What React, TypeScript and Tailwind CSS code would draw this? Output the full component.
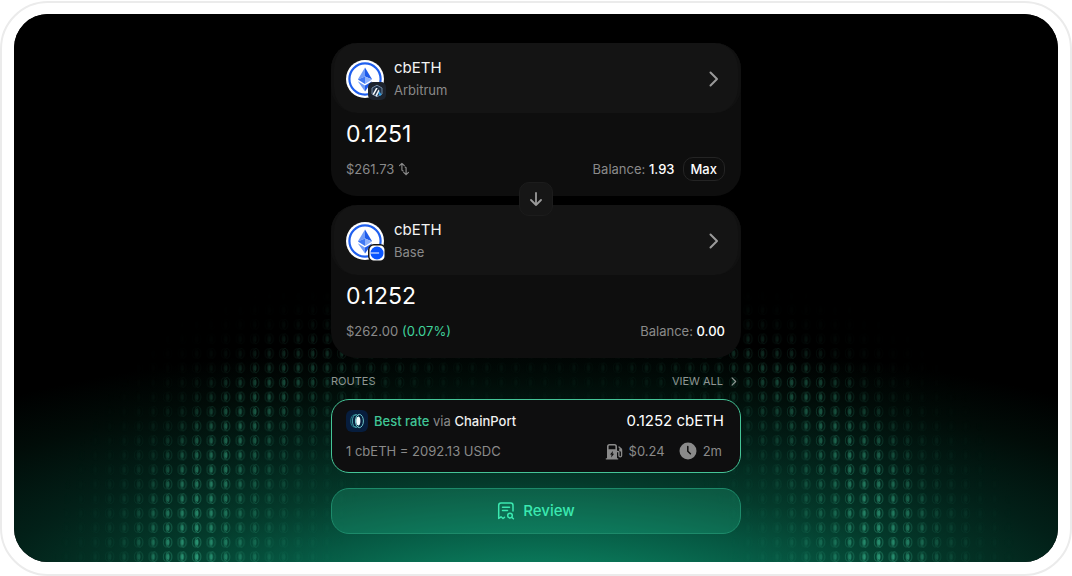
import type { ReactNode } from "react";

type IconProps = { className?: string };

function ChevronRight({ className }: IconProps) {
  return (
    <svg viewBox="0 0 10 16" className={className} fill="none" stroke="currentColor" strokeWidth="2" strokeLinecap="round" strokeLinejoin="round" aria-hidden="true">
      <path d="M1.500 1.500 8 8l-6.500 6.500" />
    </svg>
  );
}

function SwapIcon() {
  return (
    <svg viewBox="0 0 12 14" className="h-[14px] w-3" fill="none" stroke="currentColor" strokeWidth="1.200" strokeLinecap="round" strokeLinejoin="round" aria-hidden="true">
      <path d="M1.500 3.700 3.900 1.300 6.300 3.700M3.900 1.300v6.400c0 .8.400 1.200 1.200 1.200M10.500 10.300l-2.400 2.400-2.400-2.400M8.100 12.700V6.300c0-.8-.4-1.200-1-1.200" />
    </svg>
  );
}

function EthCoin() {
  return (
    <svg viewBox="0 0 38 38" className="size-[38px]" aria-hidden="true">
      <circle cx="19" cy="19" r="19" fill="#fff" />
      <circle cx="19" cy="19" r="15.600" fill="#fff" stroke="#1f5fee" strokeWidth="2.200" />
      <path d="M19 7.400 11.800 19.600 19 16.400z" fill="#6f9bf8" />
      <path d="M19 7.400 26.200 19.600 19 16.400z" fill="#1f5bea" />
      <path d="M11.800 19.600 19 16.400v7.500z" fill="#3f78f3" />
      <path d="M26.200 19.600 19 16.400v7.500z" fill="#8fb2fb" />
      <path d="M11.800 21.300 19 25.500v6.100z" fill="#6f9bf8" />
      <path d="M26.200 21.300 19 25.500v6.100z" fill="#1f5bea" />
    </svg>
  );
}

function ArbitrumBadge() {
  return (
    <svg viewBox="0 0 18 18" className="size-[18px]" aria-hidden="true">
      <rect width="18" height="18" rx="5" fill="#1d232d" />
      <path d="M9 3.200 14 6v6L9 14.800 4 12V6z" fill="#213147" stroke="#7b93ad" strokeWidth=".9" />
      <path d="M4.600 12.200 8 6h1.700l-3.800 7z" fill="#fff" />
      <path d="M7.200 13.700 10.600 7.400l.9 1.500-2.700 5.600z" fill="#e8f1f8" />
      <path d="m10.400 11.400 1.200-2 2 3.300-1.700 1.200z" fill="#2d9fe8" />
    </svg>
  );
}

function BaseBadge() {
  return (
    <svg viewBox="0 0 18 18" className="size-[18px]" aria-hidden="true">
      <rect x=".75" y=".75" width="16.500" height="16.500" rx="5" fill="#fff" stroke="#151515" strokeWidth="1.500" />
      <circle cx="9" cy="9" r="6.500" fill="#0a55ff" />
      <path d="M2.500 8.400h8.600v1.200H2.500z" fill="#fff" />
    </svg>
  );
}

function ChainPortLogo() {
  return (
    <svg viewBox="0 0 22 22" className="size-[22px]" fill="none" aria-hidden="true">
      <rect width="22" height="22" rx="6" fill="#071d3d" />
      <ellipse cx="8.200" cy="11" rx="3.500" ry="6" stroke="#2a8f97" strokeWidth=".8" />
      <ellipse cx="10" cy="11" rx="3.600" ry="6.500" stroke="#58c1c4" strokeWidth=".8" />
      <ellipse cx="13.400" cy="11" rx="4" ry="6.600" stroke="#79d9d8" strokeWidth=".9" />
      <ellipse cx="12.300" cy="11" rx="2.100" ry="4.200" fill="#effcff" />
    </svg>
  );
}

function GasIcon() {
  return (
    <svg viewBox="0 0 18 17" className="h-[17px] w-[18px]" aria-hidden="true">
      <path fill="currentColor" fillRule="evenodd" d="M4.500 1h5A2.500 2.500 0 0 1 12 3.500v11.700h1.200V16.600H.8v-1.400H2V3.500A2.500 2.500 0 0 1 4.500 1zm-.9 2.600v2.600h6.800V3.600c0-.6-.4-1-1-1H4.600c-.6 0-1 .4-1 1zM8 8l-3 3.600h1.600L6.100 14.400l3-3.700H7.500z" />
      <path d="M12 8.500h1c.6 0 .9.400.9 1v3c0 1.700 2.700 1.700 2.700 0V7.200c0-.6-.2-1-.6-1.400L14 4" fill="none" stroke="currentColor" strokeWidth="1.300" strokeLinecap="round" />
      <path d="M14.200 5.500h2v3h-1c-.6 0-1-.4-1-1z" fill="currentColor" />
    </svg>
  );
}

function ClockIcon() {
  return (
    <svg viewBox="0 0 18 18" className="size-[18px]" aria-hidden="true">
      <circle cx="9" cy="9" r="8.500" fill="currentColor" />
      <path d="M8.800 4.600v4.600l2.600 2.500" fill="none" stroke="#0e0e0e" strokeWidth="1.500" strokeLinecap="round" strokeLinejoin="round" />
    </svg>
  );
}

function ReviewIcon() {
  return (
    <svg viewBox="0 0 18 18" className="size-[18px]" fill="none" stroke="currentColor" strokeWidth="1.500" strokeLinecap="round" strokeLinejoin="round" aria-hidden="true">
      <path d="M16 9V3.500C16 2 15.200 1 13.700 1H4C2.500 1 1.700 2 1.700 3.500V16.500l2.300-1.700 2 1.700 1.500-1.200" />
      <path d="M5.500 5.200h7M5.500 8.600h5" />
      <circle cx="13" cy="13.600" r="2.300" />
      <path d="m14.800 15.400 1.600 1.400" />
    </svg>
  );
}

function Backdrop() {
  return (
    <svg className="absolute inset-0 size-full" viewBox="0 0 1044 548" preserveAspectRatio="xMidYMax slice" aria-hidden="true">
      <defs>
        <radialGradient id="glow" gradientUnits="userSpaceOnUse" cx="0" cy="0" r="1" gradientTransform="translate(522 600) scale(860 275)">
          <stop offset="0" stopColor="#0b8a69" />
          <stop offset=".19" stopColor="#0a7658" />
          <stop offset=".33" stopColor="#065a44" />
          <stop offset=".48" stopColor="#043a2b" />
          <stop offset=".66" stopColor="#022018" />
          <stop offset=".85" stopColor="#010c08" />
          <stop offset="1" stopColor="#000" />
        </radialGradient>
        <pattern id="coins" patternUnits="userSpaceOnUse" x="131.700" y="535.500" width="14.510" height="14.530">
          <g transform="translate(7.250 7.260)" fill="none" stroke="#45cfa3" strokeWidth=".6">
            <ellipse cx="-1.200" cy="0" rx="2.800" ry="4.600" strokeOpacity=".6" />
            <ellipse cx="1.400" cy="0" rx="2.900" ry="4.900" strokeOpacity=".8" />
            <ellipse cx=".3" cy="0" rx="1.500" ry="3" fill="#45cfa3" fillOpacity=".7" stroke="none" />
          </g>
        </pattern>
        <radialGradient id="ring" gradientUnits="userSpaceOnUse" cx="0" cy="0" r="1" gradientTransform="translate(522 548) scale(485 375)">
          <stop offset=".4" stopColor="#fff" stopOpacity="0" />
          <stop offset=".52" stopColor="#fff" stopOpacity=".14" />
          <stop offset=".63" stopColor="#fff" stopOpacity=".5" />
          <stop offset=".7" stopColor="#fff" stopOpacity=".85" />
          <stop offset=".76" stopColor="#fff" stopOpacity=".7" />
          <stop offset=".84" stopColor="#fff" stopOpacity=".22" />
          <stop offset=".92" stopColor="#fff" stopOpacity=".06" />
          <stop offset="1" stopColor="#fff" stopOpacity="0" />
        </radialGradient>
        <linearGradient id="rise" x1="0" y1="0" x2="0" y2="1">
          <stop offset="0" stopColor="#000" />
          <stop offset=".15" stopColor="#2a2a2a" />
          <stop offset=".35" stopColor="#808080" />
          <stop offset="1" stopColor="#fff" />
        </linearGradient>
        <mask id="coinMask" maskUnits="userSpaceOnUse" x="0" y="270" width="1044" height="278">
          <rect y="270" width="1044" height="278" fill="url(#rise)" />
        </mask>
        <mask id="ringMask" maskUnits="userSpaceOnUse" x="0" y="270" width="1044" height="278">
          <rect y="270" width="1044" height="278" fill="url(#ring)" />
        </mask>
      </defs>
      <rect width="1044" height="548" fill="url(#glow)" />
      <g mask="url(#ringMask)">
        <rect y="270" width="1044" height="278" fill="url(#coins)" mask="url(#coinMask)" />
      </g>
    </svg>
  );
}

type TokenCardProps = {
  symbol: string;
  chain: string;
  badge: ReactNode;
  amount: string;
  value: ReactNode;
  balance: string;
  action?: ReactNode;
};

function TokenCard({ symbol, chain, badge, amount, value, balance, action }: TokenCardProps) {
  return (
    <section className="rounded-[26px] bg-[#0e0e0e] pb-[15px]">
      <button type="button" className="flex h-[70px] w-full items-center rounded-[26px] border-x-3 border-[#111] bg-[#141414] pt-[2px] pr-[19px] pl-3 text-left">
        <span className="relative">
          <EthCoin />
          <span className="absolute -right-[2px] -bottom-[2px]">{badge}</span>
        </span>
        <span className="ml-[10px] flex flex-1 flex-col">
          <span className="text-[15px] leading-[22px] text-[#f4f4f4]">{symbol}</span>
          <span className="text-[13px] leading-[22px] text-[#8a8a8a]">{chain}</span>
        </span>
        <ChevronRight className="h-4 w-[10px] text-[#9a9a9a]" />
      </button>
      <div className="pr-4 pl-[15px]">
        <p className="mt-[7px] text-[23px] leading-7 text-white">{amount}</p>
        <div className="mt-[9px] flex h-6 items-center justify-between text-[13px] leading-5 text-[#8a8a8a]">
          <span className="flex items-center gap-1">{value}</span>
          <span className="flex items-center gap-2">
            <span>
              Balance: <span className="font-medium text-white">{balance}</span>
            </span>
            {action}
          </span>
        </div>
      </div>
    </section>
  );
}

export default function App() {
  return (
    <div className="flex min-h-screen bg-white pt-px font-['Inter',sans-serif]">
      <div className="flex flex-1 rounded-[48px] border-2 border-[#ebebeb] bg-white px-3 pt-[11px] pb-3">
        <main className="relative flex flex-1 justify-center overflow-hidden rounded-[34px] bg-black px-4 pt-[29px] pb-7">
          <Backdrop />
          <div className="relative w-full max-w-[410px]">
            <div className="relative flex flex-col gap-[9px]">
              <TokenCard
                symbol="cbETH"
                chain="Arbitrum"
                badge={<ArbitrumBadge />}
                amount="0.1251"
                value={
                  <>
                    $261.73 <SwapIcon />
                  </>
                }
                balance="1.93"
                action={
                  <button type="button" className="h-6 rounded-[10px] border border-[#242424] px-[7px] text-[13px] leading-5 font-medium text-white">
                    Max
                  </button>
                }
              />
              <TokenCard
                symbol="cbETH"
                chain="Base"
                badge={<BaseBadge />}
                amount="0.1252"
                value={
                  <>
                    $262.00 <span className="text-[#40d39c]">(0.07%)</span>
                  </>
                }
                balance="0.00"
              />
              <button type="button" aria-label="Switch tokens" className="absolute top-1/2 left-1/2 flex size-[34px] -translate-x-1/2 -translate-y-[19px] items-center justify-center rounded-[10px] border border-[#1c1c1c] bg-[#161616] text-[#9a9a9a]">
                <svg viewBox="0 0 14 14" className="size-[14px]" fill="none" stroke="currentColor" strokeWidth="1.800" strokeLinecap="round" strokeLinejoin="round" aria-hidden="true">
                  <path d="M7 1v12M2 8l5 5 5-5" />
                </svg>
              </button>
            </div>

            <div className="mt-[14px] flex items-center justify-between text-[11px] leading-[18px] text-[#8f9693]">
              <h2>ROUTES</h2>
              <a href="#routes" className="flex items-center gap-2 pr-1">
                VIEW ALL <ChevronRight className="h-[9px] w-[6px]" />
              </a>
            </div>

            <section className="mt-[9px] flex flex-col gap-[6px] rounded-[18px] border border-[#45c497] bg-[#0e0e0f] py-[9px] pr-4 pl-[14px]">
              <div className="flex h-6 items-center justify-between">
                <p className="flex items-center gap-[6px] text-[13px] leading-5 text-[#8a8a8a]">
                  <ChainPortLogo />
                  <span>
                    <span className="font-medium text-[#40c596]">Best rate</span> via <span className="font-medium text-[#f0f0f0]">ChainPort</span>
                  </span>
                </p>
                <p className="text-[15px] leading-5 text-white">0.1252 cbETH</p>
              </div>
              <div className="flex h-6 items-center justify-between text-[13px] leading-5 text-[#8a8a8a]">
                <p>1 cbETH = 2092.13 USDC</p>
                <p className="flex items-center pr-[2px]">
                  <GasIcon />
                  <span className="mr-[14px] ml-[6px]">$0.24</span>
                  <ClockIcon />
                  <span className="ml-[6px]">2m</span>
                </p>
              </div>
            </section>

            <button type="button" className="mt-[15px] flex h-[46px] w-full items-center justify-center gap-2 rounded-[18px] border border-[#1d8a6a] bg-[#2fe0a8]/20 text-[15px] leading-5 font-medium text-[#3be8b0]">
              <ReviewIcon />
              Review
            </button>
          </div>
        </main>
      </div>
    </div>
  );
}
